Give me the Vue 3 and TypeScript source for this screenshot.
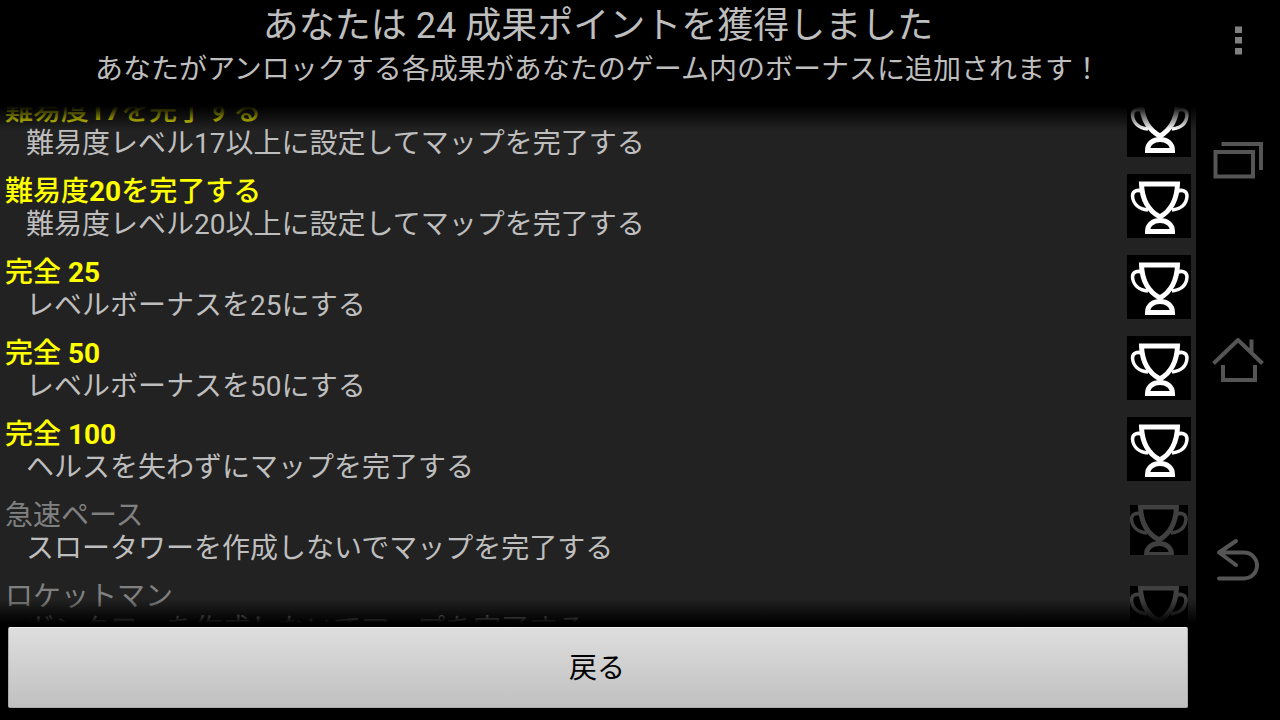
<script setup lang="ts">
import { onMounted, ref } from 'vue'

interface Part {
  text: string
  strong?: boolean
}

interface Achievement {
  title: Part[]
  description: string
  unlocked: boolean
}

const achievements: Achievement[] = [
  {
    title: [{ text: '難易度' }, { text: '17', strong: true }, { text: 'を完了する' }],
    description: '難易度レベル17以上に設定してマップを完了する',
    unlocked: true,
  },
  {
    title: [{ text: '難易度' }, { text: '20', strong: true }, { text: 'を完了する' }],
    description: '難易度レベル20以上に設定してマップを完了する',
    unlocked: true,
  },
  {
    title: [{ text: '完全 ' }, { text: '25', strong: true }],
    description: 'レベルボーナスを25にする',
    unlocked: true,
  },
  {
    title: [{ text: '完全 ' }, { text: '50', strong: true }],
    description: 'レベルボーナスを50にする',
    unlocked: true,
  },
  {
    title: [{ text: '完全 ' }, { text: '100', strong: true }],
    description: 'ヘルスを失わずにマップを完了する',
    unlocked: true,
  },
  {
    title: [{ text: '急速ペース' }],
    description: 'スロータワーを作成しないでマップを完了する',
    unlocked: false,
  },
  {
    title: [{ text: 'ロケットマン' }],
    description: 'ガンタワーを作成しないでマップを完了する',
    unlocked: false,
  },
]

const list = ref<HTMLElement | null>(null)

onMounted(() => {
  if (list.value) list.value.scrollTop = 22
})
</script>

<template>
  <div class="screen">
    <main class="app">
      <header class="head">
        <h1>あなたは 24 成果ポイントを獲得しました</h1>
        <p>あなたがアンロックする各成果があなたのゲーム内のボーナスに追加されます！</p>
      </header>

      <div class="viewport">
        <ul ref="list" class="list">
          <li v-for="(item, i) in achievements" :key="i" class="row" :class="{ locked: !item.unlocked }">
            <div class="texts">
              <h2><template v-for="(part, j) in item.title" :key="j"><b v-if="part.strong">{{ part.text }}</b><template v-else>{{ part.text }}</template></template></h2>
              <p>{{ item.description }}</p>
            </div>
            <div class="slot">
              <svg class="trophy" :viewBox="item.unlocked ? '0 0 64 64' : '4 8 58 50'" aria-hidden="true">
                <path d="M14.500 10H50.500C50 24 45 36 33 43C20 36 15 24 14.500 10Z" stroke-width="5" />
                <path d="M15 17.500C11 15 5.500 17 5.500 22C6 30 12 35 21 36" stroke-width="3.500" />
                <path d="M50.500 17.500C54.500 15 60 17 60 22C59.500 30 54 35 45 36" stroke-width="3.500" />
                <path d="M20.500 57.500H45.500C45.500 50 39.500 46.500 33 46.500S20.500 50 20.500 57.500Z" stroke-width="5" />
              </svg>
            </div>
          </li>
        </ul>
      </div>

      <footer class="foot">
        <button type="button" class="back">戻る</button>
      </footer>
    </main>

    <nav class="nav">
      <button type="button" aria-label="メニュー">
        <svg class="menu" width="52" height="44" viewBox="0 0 52 44">
          <path d="M23 8.500h7v6.500h-7zM23 19h7v6.500h-7zM23 30h7v6.500h-7z" />
        </svg>
      </button>
      <button type="button" aria-label="最近使ったアプリ">
        <svg width="52" height="44" viewBox="0 0 52 44">
          <path d="M3.500 14H41V38.500H3.500ZM9.500 6H49V32" />
        </svg>
      </button>
      <button type="button" aria-label="ホーム">
        <svg width="52" height="44" viewBox="0 0 52 44">
          <path d="M1.500 25.500L26 2L50.500 25.500M39.500 1.500V14M11 27V42H43V27" />
        </svg>
      </button>
      <button type="button" aria-label="戻る">
        <svg class="round" width="52" height="44" viewBox="0 0 52 44">
          <path d="M24 3L7 14.500L24 27M8 14.500H32A13 13 0 0 1 32 40.500H7" />
        </svg>
      </button>
    </nav>
  </div>
</template>

<style>
body {
  margin: 0;
  background: #000;
}
</style>

<style scoped>
.screen {
  display: flex;
  height: 100vh;
  background: #000;
  color: #bebebe;
  font-family: Roboto, "Noto Sans CJK JP", sans-serif;
  font-size: 28px;
}

.app {
  flex: 1;
  min-width: 0;
  display: flex;
  flex-direction: column;
}

h1,
h2,
p,
ul {
  margin: 0;
  padding: 0;
  font-weight: 400;
}

.head {
  padding: 2px 0 16px;
  text-align: center;
}

h1 {
  font-size: 36px;
  line-height: 48px;
}

.head p {
  line-height: 40px;
}

.viewport {
  position: relative;
  flex: 1;
  min-height: 0;
  background: #222;
}

.viewport::before,
.viewport::after {
  content: "";
  position: absolute;
  left: 0;
  right: 0;
  height: 24px;
  pointer-events: none;
}

.viewport::before {
  top: 0;
  background: linear-gradient(#000, transparent);
}

.viewport::after {
  bottom: 0;
  background: linear-gradient(transparent, #000);
}

.list {
  height: 100%;
  overflow-y: auto;
  scrollbar-width: none;
  list-style: none;
}

.row {
  display: flex;
  align-items: center;
  height: 81px;
  padding: 0 5px;
}

.texts {
  flex: 1;
  min-width: 0;
  padding-top: 4px;
}

h2,
.row p {
  font-size: 28px;
  line-height: 33px;
  white-space: nowrap;
}

h2 {
  color: #ff0;
  font-weight: 500;
}

h2 b {
  font-weight: 700;
}

.row p {
  padding-left: 21px;
}

.locked h2 {
  color: #808080;
  font-weight: 400;
}

.slot {
  display: flex;
  justify-content: center;
  width: 64px;
}

.trophy {
  width: 64px;
  height: 64px;
  background: #000;
  fill: none;
  stroke: #fff;
}

.locked .trophy {
  width: 58px;
  height: 50px;
  stroke: #404040;
}

.foot {
  padding: 4px 8px 12px;
}

.back {
  display: block;
  width: 100%;
  height: 81px;
  padding: 0 2px 4px 0;
  border: 1px solid #aaa;
  border-top-color: #f0f0f0;
  border-radius: 2px;
  background: linear-gradient(#dedede, #c0c0c0);
  color: #000;
  font: inherit;
}

.nav {
  display: grid;
  grid-template-rows: 1fr 2fr 3fr 2fr 1fr;
  width: 84px;
}

.nav button {
  display: flex;
  align-items: center;
  justify-content: center;
  padding: 0;
  border: 0;
  background: none;
}

.nav svg {
  fill: none;
  stroke: #555;
  stroke-width: 4;
}

.nav .menu {
  fill: #808080;
  stroke: none;
}

.nav .round {
  stroke-linecap: round;
  stroke-linejoin: round;
}
</style>
